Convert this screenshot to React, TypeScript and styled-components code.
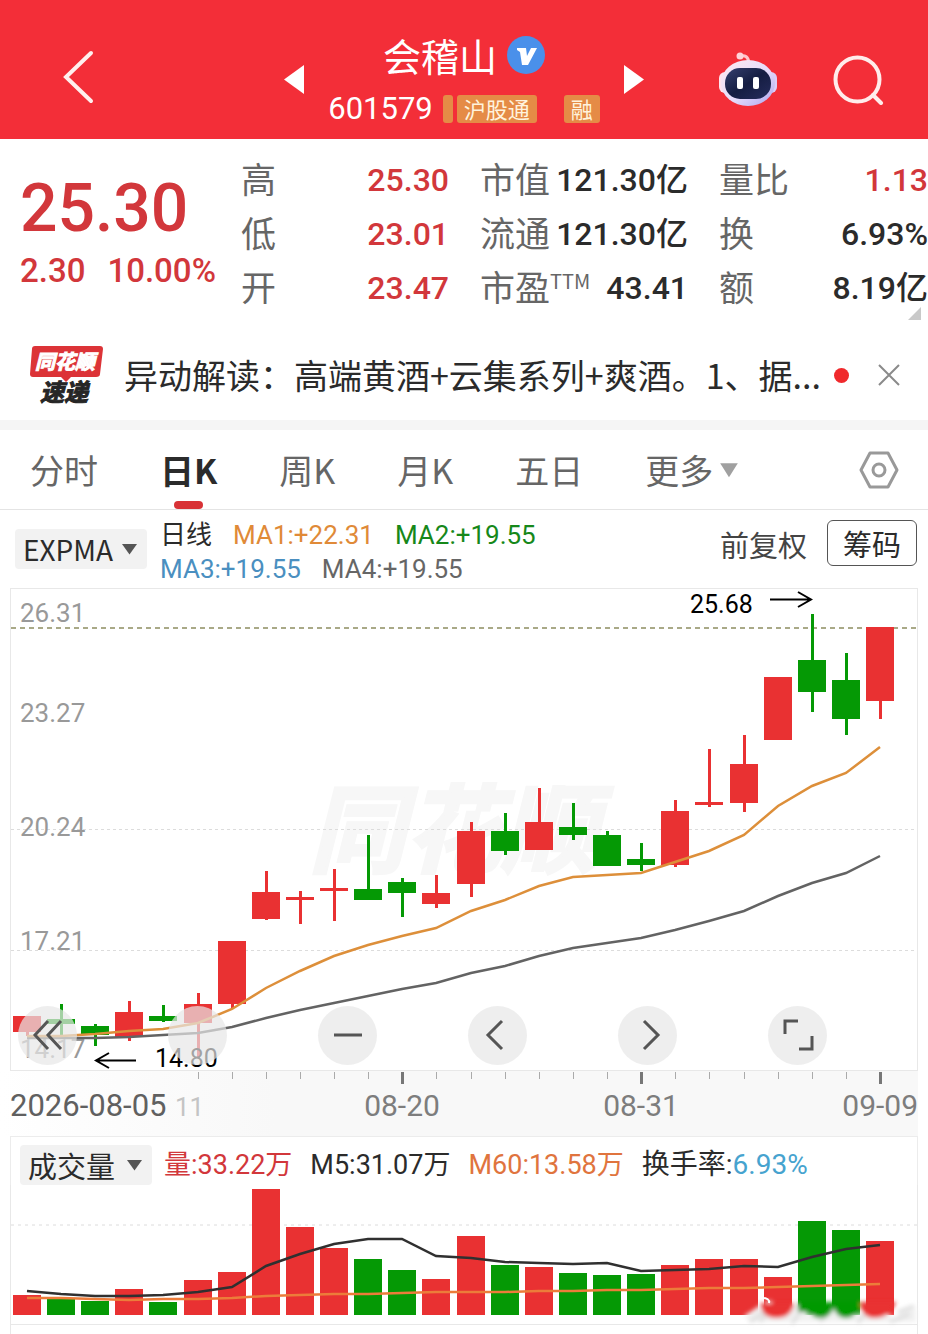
import React from "react";
import styled, { createGlobalStyle } from "styled-components";

const RED = "#d2373b";
const UP = "#e93132";
const DOWN = "#059905";
const NUM = `Roboto, "Noto Sans CJK SC", sans-serif`;
const CJK = `"Noto Sans CJK SC", sans-serif`;

const Global = createGlobalStyle`
  *, *::before, *::after { box-sizing: border-box; }
  body { margin: 0; background: #fff; font-family: ${CJK}; color: #2b2b2b; }
  button, select { font: inherit; color: inherit; border: 0; background: none; padding: 0; margin: 0; }
  p, h1, dl, dd, dt { margin: 0; font-weight: 400; }
  svg { display: block; }
`;

/* ---------- header ---------- */
const Header = styled.header`
  display: grid;
  grid-template-columns: 1fr minmax(0, 360px) 1fr;
  align-items: center;
  padding: 33px 44px 13px;
  background: #f32e38;
  color: #fff;
`;
const Switcher = styled.div`
  display: flex;
  align-items: center;
  justify-content: space-between;
`;
const Titles = styled.div`
  display: flex;
  flex-direction: column;
  align-items: center;
  gap: 14px;
`;
const NameRow = styled.div`
  display: flex;
  align-items: center;
  gap: 10px;
  height: 44px;
`;
const Name = styled.h1`
  font-size: 38px;
  line-height: 44px;
`;
const CodeRow = styled.div`
  display: flex;
  align-items: center;
  height: 35px;
`;
const Code = styled.span`
  font: 400 31px/35px ${NUM};
  margin-right: 10px;
`;
const Badge = styled.span<{ $gap?: number }>`
  min-width: 10px;
  height: 28px;
  padding: 0 ${(p) => (p.children ? 7 : 0)}px;
  margin-left: ${(p) => p.$gap ?? 0}px;
  border-radius: 3px;
  background: #e58b46;
  color: #fff3dd;
  font-size: 22px;
  line-height: 26px;
`;
const BackCell = styled.div`
  padding-left: 18px;
`;
const HeaderTools = styled.div`
  display: flex;
  justify-content: flex-end;
  align-items: center;
  gap: 55px;
`;
const IconButton = styled.button`
  display: inline-flex;
  align-items: center;
  justify-content: center;
  flex: none;
  cursor: pointer;
`;

/* ---------- quote ---------- */
const Quote = styled.section`
  position: relative;
  display: grid;
  grid-template-columns: minmax(0, 190fr) minmax(0, 208fr) minmax(0, 208fr) minmax(0, 209fr);
  column-gap: 31px;
  padding: 14px 0 15px 20px;
`;
const PriceBlock = styled.div`
  font-family: ${NUM};
  font-weight: 500;
  color: ${RED};
  white-space: nowrap;
  padding-top: 18px;
`;
const Price = styled.div`
  font-size: 66px;
  line-height: 76px;
`;
const Change = styled.div`
  display: flex;
  gap: 22px;
  font-size: 33px;
  line-height: 48px;
`;
const Stats = styled.dl``;
const Stat = styled.div`
  display: flex;
  justify-content: space-between;
  height: 54px;
  white-space: nowrap;
`;
const StatLabel = styled.dt`
  font-size: 35px;
  line-height: 50px;
  color: #666;
  display: flex;
`;
const Sup = styled.span`
  font-size: 20px;
  line-height: 40px;
`;
const StatValue = styled.dd<{ $red?: boolean }>`
  font: 500 32px/54px ${NUM};
  color: ${(p) => (p.$red ? RED : "#2b2b2b")};
`;
const Corner = styled.span`
  position: absolute;
  right: 7px;
  bottom: 10px;
  border-left: 13px solid transparent;
  border-bottom: 13px solid #c9c9c9;
`;

/* ---------- notice ---------- */
const Notice = styled.section`
  display: flex;
  align-items: center;
  height: 90px;
  padding: 0 28px 0 29px;
`;
const NoticeText = styled.p`
  flex: 1;
  min-width: 0;
  margin-left: 19px;
  font-size: 34px;
  line-height: 50px;
  white-space: nowrap;
  overflow: hidden;
`;
const Dot = styled.span`
  width: 15px;
  height: 15px;
  margin-right: 29px;
  border-radius: 50%;
  background: #f0292c;
`;

/* ---------- tabs ---------- */
const Tabs = styled.nav`
  display: flex;
  align-items: center;
  gap: 62px;
  height: 90px;
  padding: 0 29px 0 30px;
  border-top: 10px solid #f5f5f5;
  border-bottom: 1px solid #e4e4e4;
`;
const Tab = styled.button<{ $active?: boolean }>`
  position: relative;
  display: flex;
  align-items: center;
  gap: 6px;
  height: 79px;
  font-size: 34px;
  line-height: 76px;
  font-weight: ${(p) => (p.$active ? 700 : 400)};
  color: ${(p) => (p.$active ? "#2b2b2b" : "#666")};
  cursor: pointer;
  &::after {
    content: "";
    display: ${(p) => (p.$active ? "block" : "none")};
    position: absolute;
    left: calc(50% - 15px);
    bottom: 0;
    width: 29px;
    height: 8px;
    border-radius: 4px;
    background: #d83236;
  }
`;
const Settings = styled(IconButton)`
  margin-left: auto;
`;

/* ---------- indicator bar ---------- */
const Indicators = styled.section`
  display: flex;
  align-items: center;
  height: 78px;
  padding: 0 11px 0 15px;
`;
const Picker = styled.label`
  position: relative;
  flex: none;
  width: 132px;
  font: 400 28px/40px ${CJK};
  select {
    appearance: none;
    width: 100%;
    height: 40px;
    padding: 0 30px 3px 8px;
    border-radius: 4px;
    background: #f2f2f2;
    outline: 0;
  }
  svg {
    position: absolute;
    right: 9px;
    top: 14px;
    pointer-events: none;
  }
`;
const AvgList = styled.div`
  flex: 1;
  margin-left: 13px;
  padding-top: 6px;
  font: 400 26px/34px ${NUM};
  white-space: nowrap;
`;
const AvgLine = styled.div`
  display: flex;
  gap: 21px;
`;
const Tint = styled.span<{ $c: string }>`
  color: ${(p) => p.$c};
`;
const Adjust = styled.button`
  font-size: 29px;
  line-height: 44px;
  color: #444;
  margin: 0 20px 10px 0;
`;
const Chips = styled.button`
  width: 90px;
  height: 46px;
  margin-bottom: 12px;
  border: 1px solid #555;
  border-radius: 6px;
  font-size: 29px;
  line-height: 42px;
`;

/* ---------- charts ---------- */
const ChartArea = styled.section`
  position: relative;
  svg.plot { width: 100%; height: auto; }
`;
const Controls = styled.div`
  position: absolute;
  left: 18px;
  right: 101px;
  bottom: 13%;
  display: flex;
  justify-content: space-between;
`;
const Round = styled.button`
  display: flex;
  align-items: center;
  justify-content: center;
  width: 59px;
  height: 59px;
  border-radius: 50%;
  background: rgba(231, 231, 231, 0.7);
  cursor: pointer;
`;
const VolumeBar = styled.div`
  display: flex;
  align-items: center;
  gap: 18px;
  height: 49px;
  margin: 0 10px;
  padding: 8px 0 0 9px;
  border: 1px solid #ececec;
  border-bottom: 0;
  white-space: nowrap;
  font: 400 27px/40px ${NUM};
`;
const VolPicker = styled(Picker)`
  margin-right: -6px;
  font-size: 29px;
`;
const Rate = styled.span`
  font-size: 28px;
`;

/* ---------- data ---------- */
type Candle = [up: number, top: number, bottom: number, high: number, low: number];
const candles: Candle[] = [
  [1, 1016, 1032, 1016, 1036], [0, 1019, 1024, 1004, 1035], [0, 1026, 1035, 1024, 1046],
  [1, 1012, 1037, 1001, 1041], [0, 1016, 1021, 1005, 1022], [1, 1004, 1023, 993, 1058],
  [1, 941, 1004, 941, 1008], [1, 892, 919, 871, 920], [1, 897, 900, 891, 924],
  [1, 888, 891, 869, 921], [0, 889, 900, 835, 900], [0, 882, 893, 878, 917],
  [1, 893, 904, 875, 908], [1, 831, 884, 822, 897], [0, 831, 851, 813, 855],
  [1, 822, 850, 788, 850], [0, 827, 835, 803, 840], [0, 835, 866, 831, 866],
  [0, 859, 865, 843, 871], [1, 811, 865, 800, 867], [1, 802, 805, 749, 807],
  [1, 764, 803, 735, 812], [1, 677, 740, 677, 740], [0, 660, 692, 614, 712],
  [0, 680, 719, 653, 735], [1, 627, 701, 627, 719],
];
const fast = [1036, 1036, 1034, 1031, 1029, 1023, 1009, 988, 971, 956, 945, 936, 928, 911, 900, 886, 877, 875, 873, 862, 851, 835, 806, 786, 773, 747];
const slow = [1038, 1038, 1038, 1037, 1035, 1033, 1027, 1018, 1010, 1003, 996, 989, 983, 973, 966, 956, 948, 943, 938, 930, 921, 911, 896, 883, 873, 856];
const volumes = [1295, 1299, 1301, 1289, 1302, 1280, 1272, 1189, 1227, 1248, 1259, 1270, 1279, 1236, 1265, 1267, 1273, 1275, 1274, 1265, 1259, 1259, 1277, 1221, 1230, 1241];
const vol5 = [1291, 1294, 1296, 1296, 1295, 1292, 1287, 1266, 1254, 1244, 1239, 1239, 1256, 1258, 1262, 1263, 1264, 1263, 1271, 1270, 1269, 1266, 1267, 1257, 1249, 1245];
const vol60 = [1298, 1298, 1299, 1300, 1299, 1299, 1298, 1296, 1295, 1294, 1294, 1293, 1292, 1292, 1292, 1291, 1291, 1290, 1290, 1289, 1288, 1288, 1287, 1286, 1285, 1284];

const xAt = (i: number) => Math.round(27 + i * 34.12);
const line = (ys: number[]) => ys.map((y, i) => `${xAt(i)},${y}`).join(" ");
const color = (up: number) => (up ? UP : DOWN);

const prices: [string, number][] = [["26.31", 622], ["23.27", 722], ["20.24", 836], ["17.21", 950], ["14.17", 1058]];

const Caret = ({ w = 17, h = 12, fill = "#555" }) => (
  <svg width={w} height={h} viewBox="0 0 17 12" preserveAspectRatio="none" aria-hidden="true">
    <path d="M1 1h15L8.500 11.500z" fill={fill} />
  </svg>
);

const Robot = () => (
  <svg width="60" height="56" viewBox="0 0 60 56" aria-hidden="true">
    <defs>
      <linearGradient id="shell" x1="0" y1="0" x2="1" y2="1">
        <stop offset="0" stopColor="#ffe9f0" />
        <stop offset=".55" stopColor="#e6dcfb" />
        <stop offset="1" stopColor="#aaa2ee" />
      </linearGradient>
      <linearGradient id="visor" x1="0" y1="0" x2="1" y2="1">
        <stop offset="0" stopColor="#36406f" />
        <stop offset=".5" stopColor="#151d42" />
        <stop offset="1" stopColor="#252c5c" />
      </linearGradient>
    </defs>
    <path d="M22 4q8-2 9 7" fill="none" stroke="#ffc4cb" strokeWidth="3" />
    <circle cx="22" cy="4" r="3.500" fill="#ffd2d8" />
    <rect x="1" y="20" width="12" height="21" rx="6" fill="#ffe3ee" />
    <rect x="47" y="20" width="12" height="21" rx="6" fill="#dccdf8" />
    <ellipse cx="30" cy="31" rx="27" ry="23" fill="url(#shell)" />
    <rect x="7" y="16" width="46" height="31" rx="15" fill="url(#visor)" />
    <rect x="19" y="25" width="6" height="12" rx="2" fill="#fff" />
    <rect x="35" y="25" width="6" height="12" rx="2" fill="#fff" />
  </svg>
);

const Logo = () => (
  <svg width="76" height="66" viewBox="0 -3 76 66" role="img" aria-label="同花顺速递">
    <path d="M6 1h65q3 0 3 3l-3 25q0 3-4 3H42l-5 5-5-5H4q-3 0-3-3L3 4q0-3 3-3z" fill="#dc3337" />
    <text x="36" y="24" textAnchor="middle" fontFamily={CJK} fontSize="20" fontWeight="700" fontStyle="italic" fill="#fff" stroke="#fff" strokeWidth="1">同花顺</text>
    <text x="35" y="56" textAnchor="middle" fontFamily={CJK} fontSize="24" fontWeight="700" fontStyle="italic" fill="#262626" stroke="#262626" strokeWidth="1">速递</text>
  </svg>
);

const Glyph = ({ d }: { d: string }) => (
  <svg width="34" height="34" viewBox="0 0 34 34" fill="none" stroke="#555" strokeWidth="3" aria-hidden="true">
    <path d={d} />
  </svg>
);

const PriceChart = () => (
  <svg className="plot" viewBox="0 588 928 548" role="img" aria-label="日K">
    <defs>
      <linearGradient id="strip" x1="0" x2="1" y1="0" y2="0">
        <stop offset="0" stopColor="#fff" />
        <stop offset=".3" stopColor="#f8f8f8" />
        <stop offset="1" stopColor="#f8f8f8" />
      </linearGradient>
    </defs>
    <rect x="0" y="1071" width="918" height="65" fill="url(#strip)" />
    <rect x="10.500" y="588.500" width="907" height="482" fill="#fff" stroke="#e8e8e8" />
    <text x="453" y="865" textAnchor="middle" fontFamily={CJK} fontSize="96" fontWeight="700" fontStyle="italic" fill="#f7f7f7" stroke="#f7f7f7" strokeWidth="3">同花顺</text>
    <g stroke="#dcdcdc" strokeDasharray="3 3">
      <path d="M11 829.500H917M11 950.500H917" />
    </g>
    <path d="M11 628H917" stroke="#a9a987" strokeWidth="2" strokeDasharray="5 4" />
    <g fontFamily={NUM} fontSize="26" fill="#999">
      {prices.map(([t, y]) => <text key={t} x="20" y={y}>{t}</text>)}
    </g>
    {candles.map(([up, top, bottom, high, low], i) => (
      <g key={i} fill={color(up)}>
        <rect x={xAt(i) - 14} y={top} width="28" height={bottom - top} />
        <rect x={xAt(i) - 1} y={high} width="3" height={low - high} />
      </g>
    ))}
    <polyline points={line(slow)} fill="none" stroke="#636363" strokeWidth="2.500" />
    <polyline points={line(fast)} fill="none" stroke="#dd8f3a" strokeWidth="2.500" />
    <g fontFamily={NUM} fontSize="25" fill="#000">
      <text x="690" y="613">25.68</text>
      <text x="155" y="1067">14.80</text>
    </g>
    <path d="M770 599.500H811M798 592l13 7.500-13 7.500M136 1060.500H96M109 1053l-13 7.500 13 7.500" fill="none" stroke="#000" strokeWidth="2" />
    {candles.map((_, i) => {
      if (i < 5) return null;
      const major = i === 11 || i === 18 || i === 25;
      return <rect key={i} x={xAt(i) - (major ? 1 : 0)} y="1072" width={major ? 3 : 1} height={major ? 12 : 7} fill={major ? "#777" : "#aaa"} />;
    })}
    <g fontFamily={NUM} fontSize="30" fill="#7d7d7d">
      <text x="175" y="1116" fill="#c4c4c4" fontSize="26">11</text>
      <text x="10" y="1116" fill="#606060" fontSize="31">2026-08-05</text>
      <text x="402" y="1116" textAnchor="middle">08-20</text>
      <text x="641" y="1116" textAnchor="middle">08-31</text>
      <text x="918" y="1116" textAnchor="end">09-09</text>
    </g>
  </svg>
);

const VolumeChart = () => (
  <svg className="plot" viewBox="0 1185 928 149" role="img" aria-label="成交量">
    <defs>
      <filter id="soft" x="-10%" y="-80%" width="120%" height="260%"><feGaussianBlur stdDeviation="2" /></filter>
    </defs>
    <path d="M10.500 1185V1334M917.500 1185V1334M10 1324.500H918" stroke="#e8e8e8" fill="none" />
    <path d="M11 1225H917" stroke="#dcdcdc" strokeDasharray="3 4" />
    {volumes.map((y, i) => (
      <rect key={i} x={xAt(i) - 14} y={y} width="28" height={1315 - y} fill={color(candles[i][0])} />
    ))}
    <polyline points={line(vol60)} fill="none" stroke="#ec7c3a" strokeWidth="2.500" />
    <polyline points={line(vol5)} fill="none" stroke="#303030" strokeWidth="2.500" />
    <g filter="url(#soft)">
      <path d="M744 1316l18-12 8-4 12 14 14-10 14 12 24-8 20 8 22-8 18 10 10-8 12-2v14H750z" fill="#f1f1f1" />
      <path d="M750 1322l14-10M768 1312l-8 10M800 1312l-8 12M828 1314l-8 8M866 1312l-8 11M898 1312l16-6M890 1322l20-8" stroke="#dcdcdc" strokeWidth="3" fill="none" />
      <path d="M760 1303h34q-2 15-18 15-14 0-16-15zM860 1302h36q-6 16-22 16-12 0-14-16z" fill={UP} />
      <path d="M798 1302h36v5q-4 11-13 11-8 0-11-6h-12zM832 1302h28q-3 16-14 16t-14-16z" fill={DOWN} />
    </g>
    <path d="M762 1298q8 0 7 5" fill="none" stroke="#fff" strokeWidth="2" />
  </svg>
);

export default function App() {
  return (
    <>
      <Global />
      <Header>
        <BackCell>
          <IconButton aria-label="返回">
            <svg width="32" height="54" viewBox="0 0 32 54" fill="none" stroke="#fff0ee" strokeWidth="4">
              <path d="M29 3L4 27l25 24" strokeLinecap="round" />
            </svg>
          </IconButton>
        </BackCell>
        <Switcher>
          <IconButton aria-label="上一只">
            <svg width="20" height="29" viewBox="0 0 20 29"><path d="M20 0v29L0 14.500z" fill="#fff" /></svg>
          </IconButton>
          <Titles>
            <NameRow>
              <Name>会稽山</Name>
              <svg width="38" height="38" viewBox="0 0 38 38" aria-hidden="true">
                <circle cx="19" cy="19" r="19" fill="#4a90ea" />
                <path d="M10 12h9l1 8 4-8h6l-9 17h-6l-2-13-3-2z" fill="#fff" />
              </svg>
            </NameRow>
            <CodeRow>
              <Code>601579</Code>
              <Badge />
              <Badge $gap={4}>沪股通</Badge>
              <Badge $gap={27}>融</Badge>
            </CodeRow>
          </Titles>
          <IconButton aria-label="下一只">
            <svg width="20" height="29" viewBox="0 0 20 29"><path d="M0 0v29l20-14.500z" fill="#fff" /></svg>
          </IconButton>
        </Switcher>
        <HeaderTools>
          <IconButton aria-label="助手"><Robot /></IconButton>
          <IconButton aria-label="搜索">
            <svg width="51" height="50" viewBox="0 0 51 50" fill="none" stroke="#ffeceb" strokeWidth="4">
              <circle cx="24.500" cy="24.500" r="22" />
              <path d="M40 40l8 8" strokeLinecap="round" />
            </svg>
          </IconButton>
        </HeaderTools>
      </Header>

      <Quote>
        <PriceBlock>
          <Price>25.30</Price>
          <Change><span>2.30</span><span>10.00%</span></Change>
        </PriceBlock>
        <Stats>
          <Stat><StatLabel>高</StatLabel><StatValue $red>25.30</StatValue></Stat>
          <Stat><StatLabel>低</StatLabel><StatValue $red>23.01</StatValue></Stat>
          <Stat><StatLabel>开</StatLabel><StatValue $red>23.47</StatValue></Stat>
        </Stats>
        <Stats>
          <Stat><StatLabel>市值</StatLabel><StatValue>121.30亿</StatValue></Stat>
          <Stat><StatLabel>流通</StatLabel><StatValue>121.30亿</StatValue></Stat>
          <Stat><StatLabel>市盈<Sup>TTM</Sup></StatLabel><StatValue>43.41</StatValue></Stat>
        </Stats>
        <Stats>
          <Stat><StatLabel>量比</StatLabel><StatValue $red>1.13</StatValue></Stat>
          <Stat><StatLabel>换</StatLabel><StatValue>6.93%</StatValue></Stat>
          <Stat><StatLabel>额</StatLabel><StatValue>8.19亿</StatValue></Stat>
        </Stats>
        <Corner />
      </Quote>

      <Notice>
        <Logo />
        <NoticeText>异动解读：高端黄酒+云集系列+爽酒。1、据...</NoticeText>
        <Dot />
        <IconButton aria-label="关闭">
          <svg width="22" height="22" viewBox="0 0 22 22" stroke="#8a8a8a" strokeWidth="2"><path d="M1 1l20 20M21 1L1 21" /></svg>
        </IconButton>
      </Notice>

      <Tabs>
        <Tab>分时</Tab>
        <Tab $active>日K</Tab>
        <Tab>周K</Tab>
        <Tab>月K</Tab>
        <Tab>五日</Tab>
        <Tab>更多<Caret w={20} h={16} fill="#a0a0a0" /></Tab>
        <Settings aria-label="设置">
          <svg width="40" height="38" viewBox="0 0 40 38" fill="none" stroke="#999" strokeWidth="3" strokeLinejoin="round">
            <path d="M11 2h18l9 17-9 17H11L2 19z" />
            <circle cx="20" cy="19" r="6" />
          </svg>
        </Settings>
      </Tabs>

      <Indicators>
        <Picker>
          <select aria-label="指标" defaultValue="EXPMA"><option>EXPMA</option></select>
          <Caret />
        </Picker>
        <AvgList>
          <AvgLine>
            <span>日线</span>
            <Tint $c="#e08a38">MA1:+22.31</Tint>
            <Tint $c="#16881a">MA2:+19.55</Tint>
          </AvgLine>
          <AvgLine>
            <Tint $c="#4a8fc0">MA3:+19.55</Tint>
            <Tint $c="#666">MA4:+19.55</Tint>
          </AvgLine>
        </AvgList>
        <Adjust>前复权</Adjust>
        <Chips>筹码</Chips>
      </Indicators>

      <ChartArea>
        <PriceChart />
        <Controls>
          <Round aria-label="最早"><Glyph d="M17 3L4 17l13 14M30 3L17 17l13 14" /></Round>
          <Round aria-label="放大" />
          <Round aria-label="缩小"><Glyph d="M3 17h28" /></Round>
          <Round aria-label="左移"><Glyph d="M21 3L7 17l14 14" /></Round>
          <Round aria-label="右移"><Glyph d="M13 3l14 14-14 14" /></Round>
          <Round aria-label="全屏"><Glyph d="M4 16V3h13M18 31h13V18" /></Round>
        </Controls>
      </ChartArea>

      <ChartArea>
        <VolumeBar>
          <VolPicker>
            <select aria-label="副图" defaultValue="成交量"><option>成交量</option></select>
            <Caret />
          </VolPicker>
          <Tint $c={RED}>量:33.22万</Tint>
          <span>M5:31.07万</span>
          <Tint $c="#e0743e">M60:13.58万</Tint>
          <Rate>换手率:<Tint $c="#46a3cf">6.93%</Tint></Rate>
        </VolumeBar>
        <VolumeChart />
      </ChartArea>
    </>
  );
}
